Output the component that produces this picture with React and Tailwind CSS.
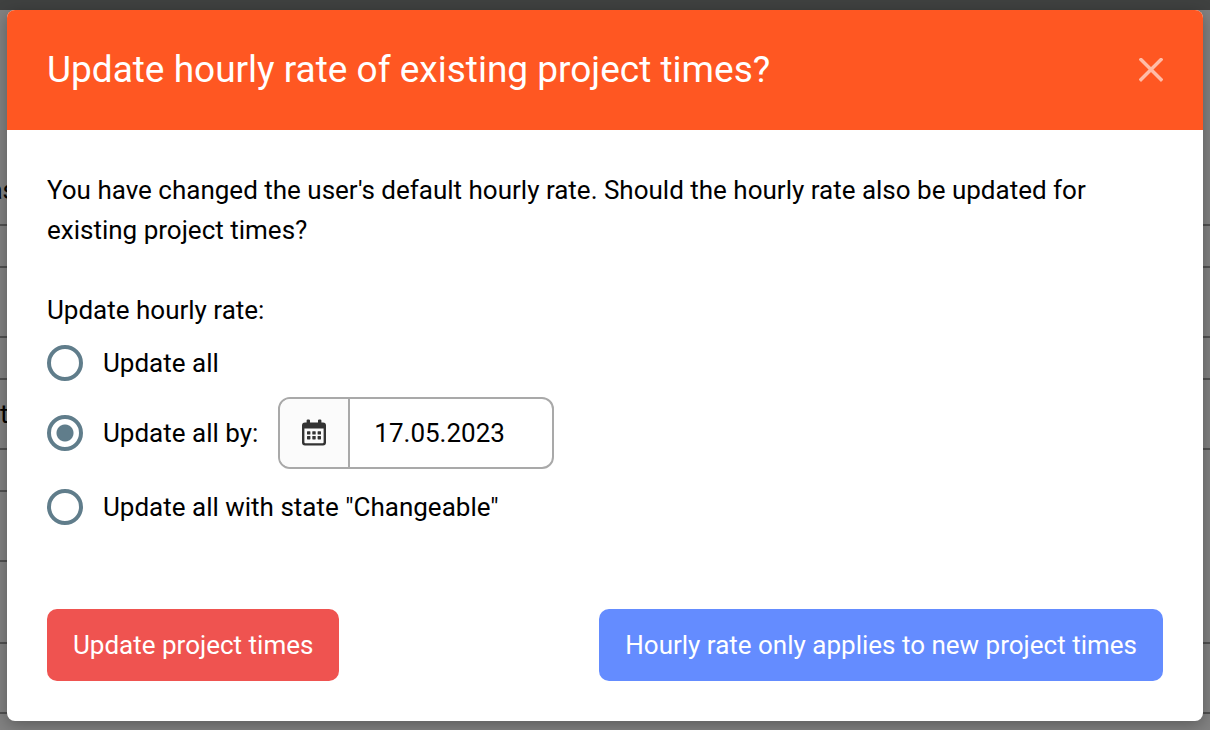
import { useState } from 'react';

// Rows of the dimmed page that stay visible on both sides of the dialog
const ROWS = [
  { height: 'h-[216px]', text: 'as', line: 'both', align: 'items-end justify-end pb-[14px]' },
  { height: 'h-[42px]', line: 'both' },
  { height: 'h-[70px]', line: 'both' },
  { height: 'h-[42px]', line: 'both' },
  { height: 'h-[70px]', text: 't', line: 'both', align: 'items-center' },
  { height: 'h-[42px]', line: 'left' },
  { height: 'h-[70px]', line: 'left' },
  { height: 'h-[82px]', line: 'both' },
  { height: 'h-[70px]', line: 'both' },
];

function PageBehind() {
  return (
    <div aria-hidden className="absolute inset-0 overflow-hidden bg-[#828282]">
      <div className="h-[10px] bg-[#3f4140]" />
      {ROWS.map((row, i) => (
        <div key={i} className={`flex justify-between ${row.height}`}>
          <div className={`flex w-4 border-b-2 border-[#515151] text-black ${row.align ?? ''}`}>{row.text}</div>
          {row.line === 'both' && <div className="w-4 border-b-2 border-[#515151]" />}
        </div>
      ))}
    </div>
  );
}

function CloseIcon() {
  return (
    <svg viewBox="0 0 24 24" className="size-6" fill="none" stroke="currentColor" strokeWidth="3.4" strokeLinecap="butt">
      <path d="M.8.3 23.2 22.7M23.2.3.8 22.7" />
    </svg>
  );
}

function CalendarIcon() {
  return (
    <svg viewBox="0 0 24 28" className="h-7 w-6" fill="#333333">
      <path
        fillRule="evenodd"
        d="M4.6 1.6a1.2 1.2 0 0 1 1.2-1.2h1a1.2 1.2 0 0 1 1.2 1.2V3.4h8V1.6a1.2 1.2 0 0 1 1.2-1.2h1a1.2 1.2 0 0 1 1.2 1.2V3.4h1.6A3 3 0 0 1 24 6.4V23.6a3 3 0 0 1-3 3H3a3 3 0 0 1-3-3V6.4a3 3 0 0 1 3-3h1.6ZM2.4 9.4V23.2a1 1 0 0 0 1 1h17.2a1 1 0 0 0 1-1V9.4Z"
      />
      {[12.2, 17].map((y) =>
        [5, 10.3, 15.6].map((x) => <rect key={`${x}-${y}`} x={x} y={y} width="3.4" height="3.4" rx="0.6" />),
      )}
    </svg>
  );
}

function RadioOption({ id, value, selected, onSelect, children }) {
  return (
    <div className="flex items-center gap-5">
      <input
        type="radio"
        id={id}
        name="scope"
        value={value}
        checked={selected === value}
        onChange={() => onSelect(value)}
        className="size-9 shrink-0 appearance-none rounded-full border-4 border-[#607d8b] bg-white bg-[radial-gradient(circle,#607d8b_8px,transparent_9px)] bg-center not-checked:bg-none"
      />
      <label htmlFor={id}>{children}</label>
    </div>
  );
}

export default function App() {
  const [scope, setScope] = useState('date');
  const [date, setDate] = useState('17.05.2023');

  return (
    <div className="relative min-h-screen font-[Roboto,sans-serif] text-[26px] leading-[40px] text-black">
      <PageBehind />

      <div className="relative px-[7px] pt-[10px] pb-[9px]">
        <div
          role="dialog"
          aria-labelledby="dialog-title"
          className="overflow-hidden rounded-lg bg-white shadow-[0_4px_16px_rgba(0,0,0,0.3)]"
        >
          <header className="flex h-[120px] items-center justify-between bg-[#ff5722] px-10 text-white">
            <h1 id="dialog-title" className="text-[37px] leading-[48px]">
              Update hourly rate of existing project times?
            </h1>
            <button type="button" aria-label="Close" className="text-[#ffbca7]">
              <CloseIcon />
            </button>
          </header>

          <form className="p-10" onSubmit={(e) => e.preventDefault()}>
            <p>
              You have changed the user's default hourly rate. Should the hourly rate also be updated for existing
              project times?
            </p>

            <fieldset className="mt-10">
              <legend>Update hourly rate:</legend>
              <div className="flex flex-col pt-[13px]">
                <RadioOption id="scope-all" value="all" selected={scope} onSelect={setScope}>
                  Update all
                </RadioOption>
                <div className="mt-[14px] mb-[18px] flex items-center gap-5">
                  <RadioOption id="scope-date" value="date" selected={scope} onSelect={setScope}>
                    Update all by:
                  </RadioOption>
                  <div className="flex h-[72px] w-[276px] overflow-hidden rounded-xl border-2 border-[#a9a9a9]">
                    <div className="flex w-[70px] shrink-0 items-center justify-center border-r-2 border-[#a9a9a9] bg-[#fbfbfb]">
                      <CalendarIcon />
                    </div>
                    <input
                      type="text"
                      aria-label="Date"
                      value={date}
                      onChange={(e) => setDate(e.target.value)}
                      className="min-w-0 flex-1 px-6 outline-none"
                    />
                  </div>
                </div>
                <RadioOption id="scope-state" value="state" selected={scope} onSelect={setScope}>
                  Update all with state "Changeable"
                </RadioOption>
              </div>
            </fieldset>

            <div className="mt-[82px] flex justify-between">
              <button type="submit" className="rounded-[10px] bg-[#ef5350] px-[26px] py-4 text-white">
                Update project times
              </button>
              <button type="button" className="rounded-[10px] bg-[#648cff] px-[26px] py-4 text-white">
                Hourly rate only applies to new project times
              </button>
            </div>
          </form>
        </div>
      </div>
    </div>
  );
}
